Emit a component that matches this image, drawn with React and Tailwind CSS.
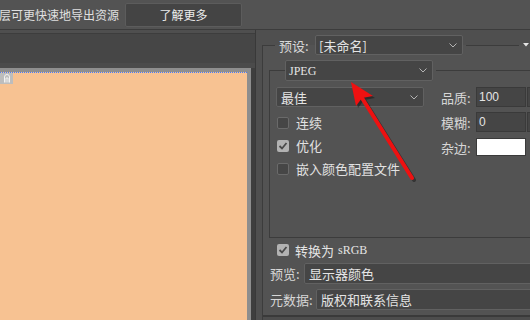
import React from "react";

const line = "bg-[#3c3c3c]";

function Chevron() {
  return (
    <svg width="8" height="5" viewBox="0 0 8 5" className="shrink-0">
      <path d="M0.5 0.5 L4 4 L7.5 0.5" fill="none" stroke="#b4b4b4" strokeWidth="1" />
    </svg>
  );
}

function Select({ className, textClass, children, chevron = true }) {
  return (
    <div
      className={`flex items-center bg-[#454545] border border-[#616161] rounded-[2px] min-w-0 ${className}`}
    >
      <span className={`flex-1 whitespace-nowrap ${textClass}`}>{children}</span>
      {chevron && (
        <span className="pr-[5px] flex items-center">
          <Chevron />
        </span>
      )}
    </div>
  );
}

function Check({ checked }) {
  return (
    <div
      className={`w-[12px] h-[12px] shrink-0 rounded-[2px] flex items-center justify-center ${
        checked ? "bg-[#b2b2b2]" : "bg-[#464646] border border-[#6a6a6a]"
      }`}
    >
      {checked && (
        <svg width="10" height="10" viewBox="0 0 10 10">
          <path d="M1.5 5 L4 7.5 L8.5 2" fill="none" stroke="#4a4a4a" strokeWidth="1.8" />
        </svg>
      )}
    </div>
  );
}

function CheckRow({ checked, label }) {
  return (
    <div className="h-[23px] flex items-center pl-px">
      <Check checked={checked} />
      <span className="ml-[7px] text-[13px] text-[#e2e2e2]">{label}</span>
    </div>
  );
}

export default function App() {
  return (
    <div className="relative w-[530px] h-[320px] overflow-hidden bg-[#535353] text-[#e4e4e4] font-['Noto_Sans_CJK_SC',sans-serif] leading-none">
      {/* top bar */}
      <div className="h-[30px] flex items-center border-b border-[#3c3c3c]">
        <span className="text-[12px] whitespace-nowrap -ml-px text-[#e0e0e0]">层可更快速地导出资源</span>
        <button className="ml-[6px] w-[117px] h-[24px] bg-[#444444] border border-[#5c5c5c] rounded-[2px] text-[12px] text-[#ececec]">
          了解更多
        </button>
      </div>

      <div className="flex h-[290px]">
        {/* workspace */}
        <div className="w-[255px] shrink-0 flex flex-col bg-[#4b4b4b]">
          <div className="h-[3px] bg-[#4f4f4f]" />
          <div className="h-[30px] bg-[#464646] border-t border-[#3d3d3d]" />
          <div className="h-[5px]" />
          <div className="flex-1 flex">
            <div className="w-[251px] shrink-0 border-t-[4px] border-r-[4px] border-[#8e8e8e] bg-[#f7c292]">
              <div className="border-t border-dotted border-[#3f7cff]">
                <div className="w-[13px] h-[11px] bg-[#bdbdbd] flex items-center justify-center">
                  <svg width="8" height="9" viewBox="0 0 8 9">
                    <path d="M1.5 8.5 V3 a2.5 2.5 0 0 1 5 0 V8.5 M3 8.5 V4 h2 v4.5" fill="none" stroke="#f2f2f2" strokeWidth="1" />
                  </svg>
                </div>
              </div>
            </div>
            <div className="flex-1 bg-[#3e3e3e]" />
          </div>
        </div>
        <div className="w-px shrink-0 bg-[#393939]" />

        {/* export panel */}
        <div className="flex-1 min-w-0 flex flex-col bg-[#4f4f4f] pl-[6px]">
          <div className="mt-[15px] flex-1 flex flex-col border-l border-[#3c3c3c] bg-[#535353]">
            {/* preset header */}
            <div className="-mt-[10px] -ml-px flex items-center h-[20px]">
              <div className={`w-[13px] h-px shrink-0 ${line}`} />
              <span className="ml-[4px] text-[13px] text-[#d8d8d8] w-[32px] shrink-0">预设:</span>
              <Select className="ml-[4px] w-[148px] shrink-0 h-[20px]" textClass="pl-[3px] text-[13px]">
                [未命名]
              </Select>
              <div className={`ml-[3px] flex-1 h-px ${line}`} />
              <svg width="6" height="4" viewBox="0 0 6 4" className="ml-[4px] mr-[1px] shrink-0">
                <path d="M0 0 H6 L3 3.5 Z" fill="#e6e6e6" />
              </svg>
            </div>

            {/* format group */}
            <div className="mt-[15px] ml-[6px] h-[168px] border-l border-b border-[#3c3c3c]">
              <div className="-mt-[10px] -ml-px flex items-center h-[21px]">
                <div className={`w-[16px] h-px shrink-0 ${line}`} />
                <Select
                  className="w-[148px] shrink-0 h-[21px]"
                  textClass="pl-[3px] text-[12px] font-['Liberation_Serif',serif]"
                >
                  JPEG
                </Select>
                <div className={`ml-[3px] flex-1 h-px ${line}`} />
              </div>

              <div className="mt-[6px] pl-[6px] flex">
                <div className="w-[148px] shrink-0 flex flex-col">
                  <Select className="h-[20px]" textClass="pl-[4px] text-[13px]">
                    最佳
                  </Select>
                  <div className="mt-[4px]">
                    <CheckRow label="连续" />
                    <CheckRow checked label="优化" />
                    <CheckRow label="嵌入颜色配置文件" />
                  </div>
                </div>

                <div className="ml-[17px] flex flex-col gap-[5px] text-[13px]">
                  <div className="flex items-center h-[20px]">
                    <span className="w-[35px] shrink-0 text-[#d6d6d6]">品质:</span>
                    <div className="w-[50px] shrink-0 h-[20px] bg-[#454545] border border-[#3a3a3a] flex items-center pl-[2px] text-[12px] font-['Liberation_Sans',sans-serif]">
                      100
                    </div>
                    <div className="ml-px w-[10px] shrink-0 h-[20px] bg-[#454545] border border-[#3a3a3a]" />
                  </div>
                  <div className="flex items-center h-[20px]">
                    <span className="w-[35px] shrink-0 text-[#d6d6d6]">模糊:</span>
                    <div className="w-[50px] shrink-0 h-[20px] bg-[#454545] border border-[#3a3a3a] flex items-center pl-[2px] text-[12px] font-['Liberation_Sans',sans-serif]">
                      0
                    </div>
                    <div className="ml-px w-[10px] shrink-0 h-[20px] bg-[#454545] border border-[#3a3a3a]" />
                  </div>
                  <div className="flex items-center h-[20px]">
                    <span className="w-[35px] shrink-0 text-[#d6d6d6]">杂边:</span>
                    <div className="w-[50px] shrink-0 h-[18px] bg-white border border-[#3a3a3a]" />
                  </div>
                </div>
              </div>
            </div>

            {/* sRGB */}
            <div className="h-[24px] flex items-center pl-[14px]">
              <Check checked />
              <span className="ml-[6px] text-[13px]">转换为</span>
              <span className="ml-[4px] text-[12px] font-['Liberation_Serif',serif]">sRGB</span>
            </div>

            <div className="mt-px flex items-center h-[20px] pl-[7px]">
              <span className="w-[34px] shrink-0 text-[13px] text-[#d6d6d6]">预览:</span>
              <Select className="flex-1 -mr-[10px] h-[21px]" textClass="pl-[4px] text-[13px]" chevron={false}>
                显示器颜色
              </Select>
            </div>
            <div className="mt-[6px] flex items-center h-[20px] pl-[7px]">
              <span className="w-[46px] shrink-0 text-[13px] text-[#d6d6d6]">元数据:</span>
              <Select className="flex-1 -mr-[10px] h-[21px]" textClass="pl-[4px] text-[13px]" chevron={false}>
                版权和联系信息
              </Select>
            </div>
            <div className="mt-[6px] border-b-2 border-[#3a3a3a]" />
            <div className="flex-1 bg-[#4d4d4d]" />
          </div>
        </div>
      </div>

      {/* red annotation arrow */}
      <svg className="absolute inset-0 pointer-events-none" width="530" height="320" viewBox="0 0 530 320">
        <g transform="translate(2 2)" opacity="0.35">
          <path d="M362 98 L412 178" stroke="#000" strokeWidth="4" strokeLinecap="round" />
          <path d="M351 82 L373 96 L362 98 L356 106 Z" fill="#000" />
        </g>
        <path d="M362 98 L412 178" stroke="#ee1111" strokeWidth="4" strokeLinecap="round" />
        <path d="M351 82 L373 96 L362 98 L356 106 Z" fill="#ee1111" />
      </svg>
    </div>
  );
}
